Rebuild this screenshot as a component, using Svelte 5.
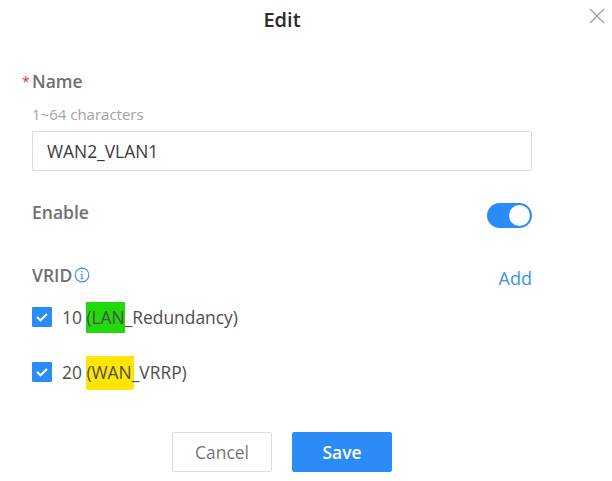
<script>
  let name = $state('WAN2_VLAN1');
  let enabled = $state(true);
  let vrids = $state([
    { id: 10, mark: 'LAN', rest: '_Redundancy)', color: 'green', checked: true },
    { id: 20, mark: 'WAN', rest: '_VRRP)', color: 'yellow', checked: true }
  ]);
</script>

<div class="modal">
  <header class="modal__head">
    <h1>Edit</h1>
    <button class="modal__close" aria-label="Close">
      <svg width="16" height="16" viewBox="0 0 16 16"><path d="M1 1l14 14M15 1L1 15" stroke="#9b9b9b" stroke-width="1.2" fill="none" /></svg>
    </button>
  </header>

  <div class="form">
    <div class="label label--name"><span class="req">*</span>Name</div>
    <div class="hint">1~64 characters</div>
    <input class="input" bind:value={name} />

    <div class="row row--enable">
      <span class="label">Enable</span>
      <button class="switch" class:switch--on={enabled} aria-label="Enable" onclick={() => enabled = !enabled}></button>
    </div>

    <div class="row row--vrid">
      <span class="label label--vrid">VRID
        <svg width="16" height="16" viewBox="0 0 16 16" fill="none" stroke="#4a90d9">
          <circle cx="8" cy="8" r="6.8" stroke-width="1.2" />
          <path d="M8 7v4.6M6.6 7.2H8M6.6 11.6h2.8" stroke-width="1.1" />
          <circle cx="8" cy="4.8" r="0.8" fill="#4a90d9" stroke="none" />
        </svg>
      </span>
      <span class="add">Add</span>
    </div>

    {#each vrids as v}
      <label class="check">
        <input type="checkbox" bind:checked={v.checked} />
        <span class="box">
          <svg width="20" height="20" viewBox="0 0 20 20"><path d="M5 10l3.5 3.3L15 7" stroke="#fff" stroke-width="2" fill="none" /></svg>
        </span>
        <span class="check__text">{v.id} <span class="mark mark--{v.color}">({v.mark}</span>{v.rest}</span>
      </label>
    {/each}
  </div>

  <footer class="modal__foot">
    <button class="btn">Cancel</button>
    <button class="btn btn--primary">Save</button>
  </footer>
</div>

<style>
  :global(body) {
    margin: 0;
    background: #fff;
    font-family: "Open Sans", "Noto Sans", sans-serif;
  }

  .modal {
    width: 612px;
    height: 481px;
    display: flex;
    flex-direction: column;
    overflow: hidden;
  }

  .modal__head {
    position: relative;
    height: 38px;
    display: flex;
    justify-content: center;
    align-items: center;
    flex-shrink: 0;
  }
  .modal__head h1 {
    margin: 0 0 0 -48px;
    font-size: 20px;
    font-weight: 600;
    color: #2b2b2b;
  }
  .modal__close {
    position: absolute;
    top: 8px;
    right: 7px;
    width: 16px;
    height: 16px;
    padding: 0;
    border: none;
    background: none;
    display: flex;
  }

  .form {
    padding: 30px 80px 0 32px;
    display: flex;
    flex-direction: column;
  }

  .label {
    font-size: 17.5px;
    font-weight: 600;
    color: #707070;
    line-height: 26px;
  }
  .label--name { position: relative; }
  .req {
    position: absolute;
    left: -10px;
    top: 1px;
    color: #e5322d;
    font-size: 14px;
    font-weight: 400;
  }
  .hint {
    margin-top: 10px;
    font-size: 15px;
    line-height: 20px;
    color: #a3a3a3;
  }
  .input {
    box-sizing: border-box;
    margin-top: 7px;
    width: 500px;
    height: 40px;
    padding: 0 14px;
    border: 1px solid #dcdcdc;
    border-radius: 2px;
    font: inherit;
    font-size: 17.4px;
    color: #3a3a3a;
    outline: none;
  }

  .row {
    display: flex;
    justify-content: space-between;
    align-items: center;
    width: 500px;
  }
  .row--enable { margin-top: 28px; align-items: flex-start; height: 30px; }
  .row--enable .switch { margin-top: 4px; }
  .row--vrid { margin-top: 33px; }

  .label--vrid {
    display: flex;
    align-items: center;
    gap: 2px;
  }

  .switch {
    width: 45px;
    height: 25px;
    padding: 0;
    border: none;
    border-radius: 13px;
    background: #bbb;
    position: relative;
  }
  .switch--on { background: #2b8cf7; }
  .switch::after {
    content: '';
    position: absolute;
    top: 2px;
    left: 2px;
    width: 21px;
    height: 21px;
    border-radius: 50%;
    background: #fff;
  }
  .switch--on::after { left: 22px; }

  .add {
    font-size: 18px;
    color: #3d94e0;
    position: relative;
    top: 3px;
  }

  .check {
    display: flex;
    align-items: center;
    height: 26px;
    margin-top: 29px;
    font-size: 17.4px;
    color: #4d4d4d;
  }
  .row--vrid + .check { margin-top: 16px; }
  .check input {
    display: none;
  }
  .box {
    width: 20px;
    height: 20px;
    background: #2b8cf7;
    border-radius: 1px;
    display: flex;
    flex-shrink: 0;
  }
  .check__text {
    margin-left: 10px;
    white-space: nowrap;
  }
  .mark { padding: 3px 0 4px; }
  .mark--green { background: #22d90b; }
  .mark--yellow { background: #ffe600; padding: 4px 2px 6px 0; margin-right: -2px; border-radius: 0 0 3px 2px; }

  .modal__foot {
    margin-top: auto;
    margin-bottom: 9px;
    display: flex;
    justify-content: center;
    gap: 20px;
    padding-right: 48px;
  }
  .btn {
    width: 100px;
    height: 40px;
    border: 1px solid #dcdcdc;
    border-radius: 2px;
    background: #fff;
    color: #757575;
    font: inherit;
    font-size: 17.4px;
    padding: 0;
  }
  .btn--primary {
    background: #2b8cf7;
    border-color: #2b8cf7;
    color: #fff;
    font-weight: 600;
  }
</style>
